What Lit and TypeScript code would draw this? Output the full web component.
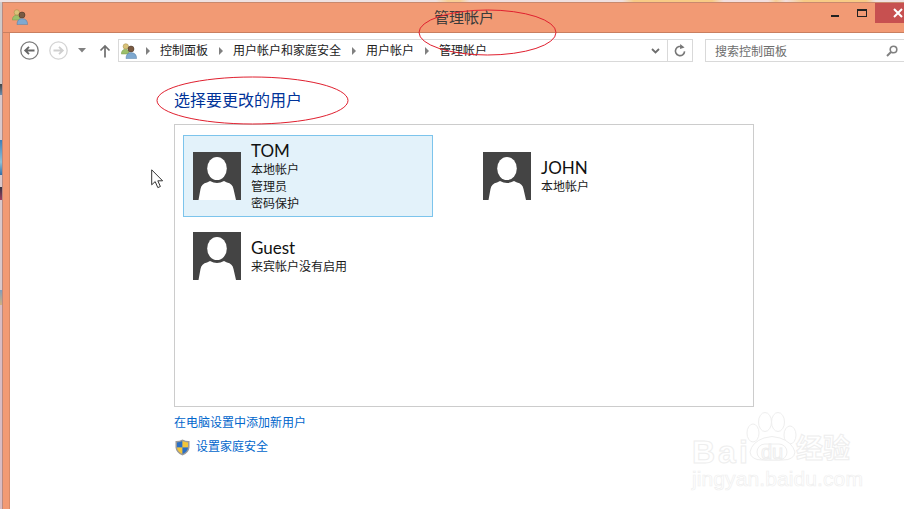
import { LitElement, html, css } from "lit";
import { customElement } from "lit/decorators.js";

const usersIcon = html`<svg class="users" viewBox="0 0 16 16" width="16" height="16">
  <circle cx="4.8" cy="3.4" r="2.7" fill="#d9c27a" stroke="#a08a45" stroke-width=".5"/>
  <path d="M0.3 11 Q0.5 6.4 4.5 6.3 Q8 6.4 8.4 11 Z" fill="#9cbf6a" stroke="#7a9a4c" stroke-width=".5"/>
  <circle cx="10" cy="6" r="3" fill="#7a5a42" stroke="#3d2a1c" stroke-width=".5"/>
  <path d="M5 15.6 Q5 9.8 10 9.6 Q15.6 9.8 15.6 15.6 Z" fill="#7fa9d0" stroke="#4f7ca6" stroke-width=".5"/>
</svg>`;

const avatar = html`<svg class="avatar" viewBox="0 0 48 48" width="48" height="48">
  <rect width="48" height="48" fill="#444444"/>
  <ellipse cx="24" cy="16.5" rx="9.8" ry="11.5" fill="#fff"/>
  <path d="M5.5 48 L7.5 37 Q8.5 31.5 14 30.5 L17 29 Q24 33 31 29 L34 30.5 Q39.5 31.5 40.5 37 L43 48 Z" fill="#fff"/>
</svg>`;

interface User { name: string; lines: string[]; selected?: boolean; }

const users: User[] = [
  { name: "TOM", lines: ["本地帐户", "管理员", "密码保护"], selected: true },
  { name: "JOHN", lines: ["本地帐户"] },
  { name: "Guest", lines: ["来宾帐户没有启用"] },
];

const crumbs = ["控制面板", "用户帐户和家庭安全", "用户帐户", "管理帐户"];

@customElement("app-root")
export class AppRoot extends LitElement {
  static styles = css`
    :host {
      display: block;
      position: relative;
      width: 904px;
      height: 509px;
      overflow: hidden;
      background: #fff;
      font-family: "Noto Sans", "Noto Sans CJK SC", sans-serif;
      font-size: 12px;
      color: #1a1a1a;
    }
    .top-strip {
      height: 2px;
      background: linear-gradient(90deg, #efe2e2 0, #efe2e2 436px, #f8cf95 448px, #f8cf95 460px, #f0e0e0 470px, #f0e0e0 622px, #f8cb85 634px, #f8cb85 712px, #f3dfdf 724px, #f3dfdf 768px, #f8cf95 776px, #f3dfdf 786px, #f8cb85 804px, #f8cb85 866px, #efe2e2 876px);
    }
    .row { display: flex; height: 507px; }
    .desk {
      width: 2px;
      flex: none;
      background: linear-gradient(180deg, #cfc9c9 0, #cfc9c9 82px, #444 82px, #6a8fb0 93px, #d9c8cc 93px, #d9c8cc 138px, #3d7fb8 138px, #8fc0d8 160px, #2f6fa8 173px, #d9c8cc 173px, #d9c8cc 185px, #334 185px, #a04060 198px, #d9c8cc 198px, #d9c8cc 288px, #7f9fc0 288px, #d0b080 303px, #d9bcc4 303px);
    }
    .window {
      flex: 1;
      display: flex;
      flex-direction: column;
      background: #f29a74;
      border-top: 1px solid #c9896e;
      border-left: 1px solid #b98a80;
    }
    .titlebar {
      height: 29px;
      flex: none;
      display: flex;
      align-items: flex-start;
      padding-left: 9px;
      border-bottom: 1px solid #c97f60;
    }
    .titlebar .users { margin-top: 6px; }
    .title {
      margin-left: 406px;
      font-size: 15px;
      line-height: 28px;
      color: #3a3a3a;
    }
    .controls { margin-left: auto; display: flex; align-items: flex-start; }
    .min { width: 8px; height: 2px; margin-top: 12px; background: #222; }
    .max { margin: 6px 0 0 18px; border: 1px solid #222; border-top-width: 2px; width: 8px; height: 5px; }
    .close {
      width: 29px;
      height: 20px;
      margin-left: 8px;
      background: #c75050;
      display: flex;
      align-items: center;
      justify-content: flex-end;
      padding-right: 1px;
      box-sizing: border-box;
    }
    .client {
      flex: 1;
      margin-left: 6px;
      background: #fff;
      display: flex;
      flex-direction: column;
      border-left: 1px solid #d98a68;
      min-width: 0;
    }
    .toolbar {
      display: flex;
      align-items: center;
      height: 23px;
      margin-top: 6px;
      flex: none;
      padding-left: 10px;
    }
    .nav { display: block; flex: none; }
    .fwd { margin-left: 10px; }
    .drop { margin-left: 10px; }
    .up { margin-left: 13px; }
    .address {
      flex: none;
      width: 575px;
      height: 23px;
      margin-left: 7px;
      box-sizing: border-box;
      border: 1px solid #d9d9d9;
      display: flex;
      align-items: center;
      padding-left: 2px;
    }
    .address .users { margin-right: 9px; flex: none; }
    .crumb { display: flex; align-items: center; color: #222; white-space: nowrap; }
    .crumb i {
      width: 0; height: 0;
      border-left: 4px solid #808080;
      border-top: 4px solid transparent;
      border-bottom: 4px solid transparent;
      margin-right: 10px;
    }
    .crumb span { margin-right: 11px; line-height: 17px; }
    .addr-end { margin-left: auto; display: flex; align-items: center; height: 100%; }
    .refresh {
      width: 24px; height: 100%;
      border-left: 1px solid #d9d9d9;
      display: flex; align-items: center; justify-content: center;
      margin-left: 7px;
    }
    .search {
      flex: 1;
      height: 23px;
      margin-left: 12px;
      box-sizing: border-box;
      border: 1px solid #d9d9d9;
      border-right: none;
      display: flex;
      align-items: center;
      padding-left: 9px;
      color: #6d6d6d;
    }
    .search svg { margin-left: auto; margin-right: 6px; }
    .content { padding: 26px 0 0 164px; }
    h1 {
      margin: 0;
      font-size: 16px;
      font-weight: 400;
      line-height: 24px;
      color: #003399;
    }
    .panel {
      width: 580px;
      height: 283px;
      box-sizing: border-box;
      margin-top: 12px;
      border: 1px solid #cccccc;
      padding: 10px 0 0 8px;
      display: grid;
      grid-template-columns: 250px 250px;
      column-gap: 40px;
      row-gap: 5px;
      align-content: start;
    }
    .tile {
      box-sizing: border-box;
      min-height: 68px;
      display: flex;
      align-items: center;
      padding-left: 9px;
      border: 1px solid transparent;
    }
    .tile.sel { background: #e3f2fa; border-color: #7cc4ec; height: 82px; }
    .avatar { flex: none; }
    .info { margin-left: 10px; padding-top: 1px; }
    .name { font-family: "Lato", "Noto Sans", sans-serif; font-size: 17px; line-height: 19px; color: #111; }
    .sub { font-size: 12px; line-height: 17px; color: #1a1a1a; }
    .info .name + .sub { margin-top: 1px; }
    .links { margin-top: 7px; }
    a { color: #0066cc; text-decoration: none; display: block; line-height: 18px; }
    .shield-link { display: flex; align-items: center; margin-top: 6px; }
    .shield-link svg { margin: 0 6px 0 1px; flex: none; }

    .ellipse { position: absolute; left: 0; top: 0; pointer-events: none; }
    .cursor { position: absolute; left: 151px; top: 169px; }
    .wm { position: absolute; left: 680px; top: 400px; width: 224px; height: 109px; }
    .wm-text {
      position: absolute;
      color: #fff;
      -webkit-text-stroke: 1px #eeeeee;
      white-space: nowrap;
      font-family: "Liberation Sans", "Noto Sans CJK SC", sans-serif;
    }
    .wm-bai { left: 12px; top: 32px; font-size: 32px; line-height: 40px; font-weight: 700; letter-spacing: 3px; }
    .wm-du { left: 81px; top: 40px; font-size: 20px; line-height: 24px; }
    .wm-jy { left: 116px; top: 34px; font-size: 27px; line-height: 30px; font-weight: 700; }
    .wm-url { left: 12px; top: 67px; font-size: 21px; line-height: 24px; letter-spacing: 0.1px; -webkit-text-stroke: 0.7px #efefef; }
    .wm-paw { position: absolute; left: 0; top: 0; }
  `;

  private tile(u: User) {
    return html`<div class="tile ${u.selected ? "sel" : ""}">
      ${avatar}
      <div class="info">
        <div class="name">${u.name}</div>
        ${u.lines.map((l) => html`<div class="sub">${l}</div>`)}
      </div>
    </div>`;
  }

  render() {
    return html`
      <div class="top-strip"></div>
      <div class="row">
        <div class="desk"></div>
        <div class="window">
          <div class="titlebar">
            ${usersIcon}
            <div class="title">管理帐户</div>
            <div class="controls">
              <div class="min"></div>
              <div class="max"></div>
              <div class="close">
                <svg width="14" height="10" viewBox="0 0 14 10"><path d="M5 1 L13 9 M13 1 L5 9" stroke="#fff" stroke-width="2"/></svg>
              </div>
            </div>
          </div>
          <div class="client">
            <div class="toolbar">
              <svg class="nav" width="19" height="19" viewBox="0 0 19 19"><circle cx="9.5" cy="9.5" r="8.7" fill="none" stroke="#7a7a7a" stroke-width="1.3"/><path d="M14.5 9.5 H5.5 M9 5.8 L5.2 9.5 L9 13.2" fill="none" stroke="#666" stroke-width="1.8"/></svg>
              <svg class="nav fwd" width="19" height="19" viewBox="0 0 19 19"><circle cx="9.5" cy="9.5" r="8.7" fill="none" stroke="#d4d4d4" stroke-width="1.3"/><path d="M4.5 9.5 H13.5 M10 5.8 L13.8 9.5 L10 13.2" fill="none" stroke="#cfcfcf" stroke-width="1.8"/></svg>
              <svg class="nav drop" width="8" height="5" viewBox="0 0 8 5"><path d="M0 0 H8 L4 4.5 Z" fill="#808080"/></svg>
              <svg class="nav up" width="12" height="14" viewBox="0 0 12 14"><path d="M6 13.5 V2 M1.5 6.5 L6 2 L10.5 6.5" fill="none" stroke="#6e6e6e" stroke-width="1.7"/></svg>
              <div class="address">
                ${usersIcon}
                ${crumbs.map((c) => html`<div class="crumb"><i></i><span>${c}</span></div>`)}
                <div class="addr-end">
                  <svg width="9" height="6" viewBox="0 0 9 6"><path d="M1 1 L4.5 4.5 L8 1" fill="none" stroke="#6e6e6e" stroke-width="1.8"/></svg>
                  <div class="refresh">
                    <svg width="12" height="13" viewBox="0 0 12 13"><path d="M8.8 3.4 A4.6 4.6 0 1 0 10.6 7.4" fill="none" stroke="#777" stroke-width="1.6"/><path d="M6.2 0 L10.6 3.6 L6 5 Z" fill="#777"/></svg>
                  </div>
                </div>
              </div>
              <div class="search">
                <span>搜索控制面板</span>
                <svg width="12" height="12" viewBox="0 0 12 12"><circle cx="7.5" cy="4.5" r="3.3" fill="none" stroke="#808080" stroke-width="1.6"/><path d="M5 7 L1 11" stroke="#808080" stroke-width="2"/></svg>
              </div>
            </div>
            <div class="content">
              <h1>选择要更改的用户</h1>
              <div class="panel">
                ${users.map((u) => this.tile(u))}
              </div>
              <div class="links">
                <a href="#">在电脑设置中添加新用户</a>
                <a href="#" class="shield-link">
                  <svg width="15" height="17" viewBox="0 0 15 17">
                    <path d="M7.5 .5 Q11 2.2 14.5 2 V8.5 Q14.2 13.5 7.5 16.5 Q.8 13.5 .5 8.5 V2 Q4 2.2 7.5 .5 Z" fill="#9a9a9a"/>
                    <path d="M7.5 2 V8.5 H2 V3.4 Q5 3.4 7.5 2 Z" fill="#2a6fc4"/>
                    <path d="M7.5 2 Q10 3.4 13 3.4 V8.5 H7.5 Z" fill="#f2c53a"/>
                    <path d="M2 8.5 H7.5 V15 Q2.4 12.6 2 8.5 Z" fill="#f2c53a"/>
                    <path d="M7.5 8.5 H13 Q12.6 12.6 7.5 15 Z" fill="#2a6fc4"/>
                  </svg>
                  设置家庭安全
                </a>
              </div>
            </div>
          </div>
        </div>
      </div>

      <svg class="ellipse" width="904" height="509" viewBox="0 0 904 509">
        <ellipse cx="487.5" cy="32.5" rx="68.5" ry="22.5" fill="none" stroke="#e0202f" stroke-width="1"/>
        <ellipse cx="252.5" cy="100.5" rx="95.5" ry="23.5" fill="none" stroke="#e0202f" stroke-width="1"/>
      </svg>

      <svg class="cursor" width="14" height="20" viewBox="0 0 14 20">
        <path d="M.7 .8 V15.8 L4.2 12.6 L6.8 18.6 L9.4 17.5 L6.8 11.8 H11.6 Z" fill="#fff" stroke="#333" stroke-width="1"/>
      </svg>

      <div class="wm">
        <svg class="wm-paw" width="224" height="109" viewBox="0 0 224 109">
          <g fill="#fff" stroke="#eeeeee" stroke-width="1">
            <ellipse cx="85" cy="22" rx="6.5" ry="9.5"/>
            <ellipse cx="98" cy="22" rx="6.5" ry="9.5"/>
            <ellipse cx="110" cy="35" rx="6" ry="9"/>
            <ellipse cx="73" cy="33" rx="6" ry="9"/>
            <path d="M70 52 Q72 42 84 38 Q92 35 100 38 Q112 42 115 52 Q114 60 103 60 H82 Q71 60 70 52 Z"/>
            <rect x="77" y="44" width="30" height="16" rx="8"/>
          </g>
        </svg>
        <div class="wm-text wm-bai">Bai</div>
        <div class="wm-text wm-du">du</div>
        <div class="wm-text wm-jy">经验</div>
        <div class="wm-text wm-url">jingyan.baidu.com</div>
      </div>
    `;
  }
}
